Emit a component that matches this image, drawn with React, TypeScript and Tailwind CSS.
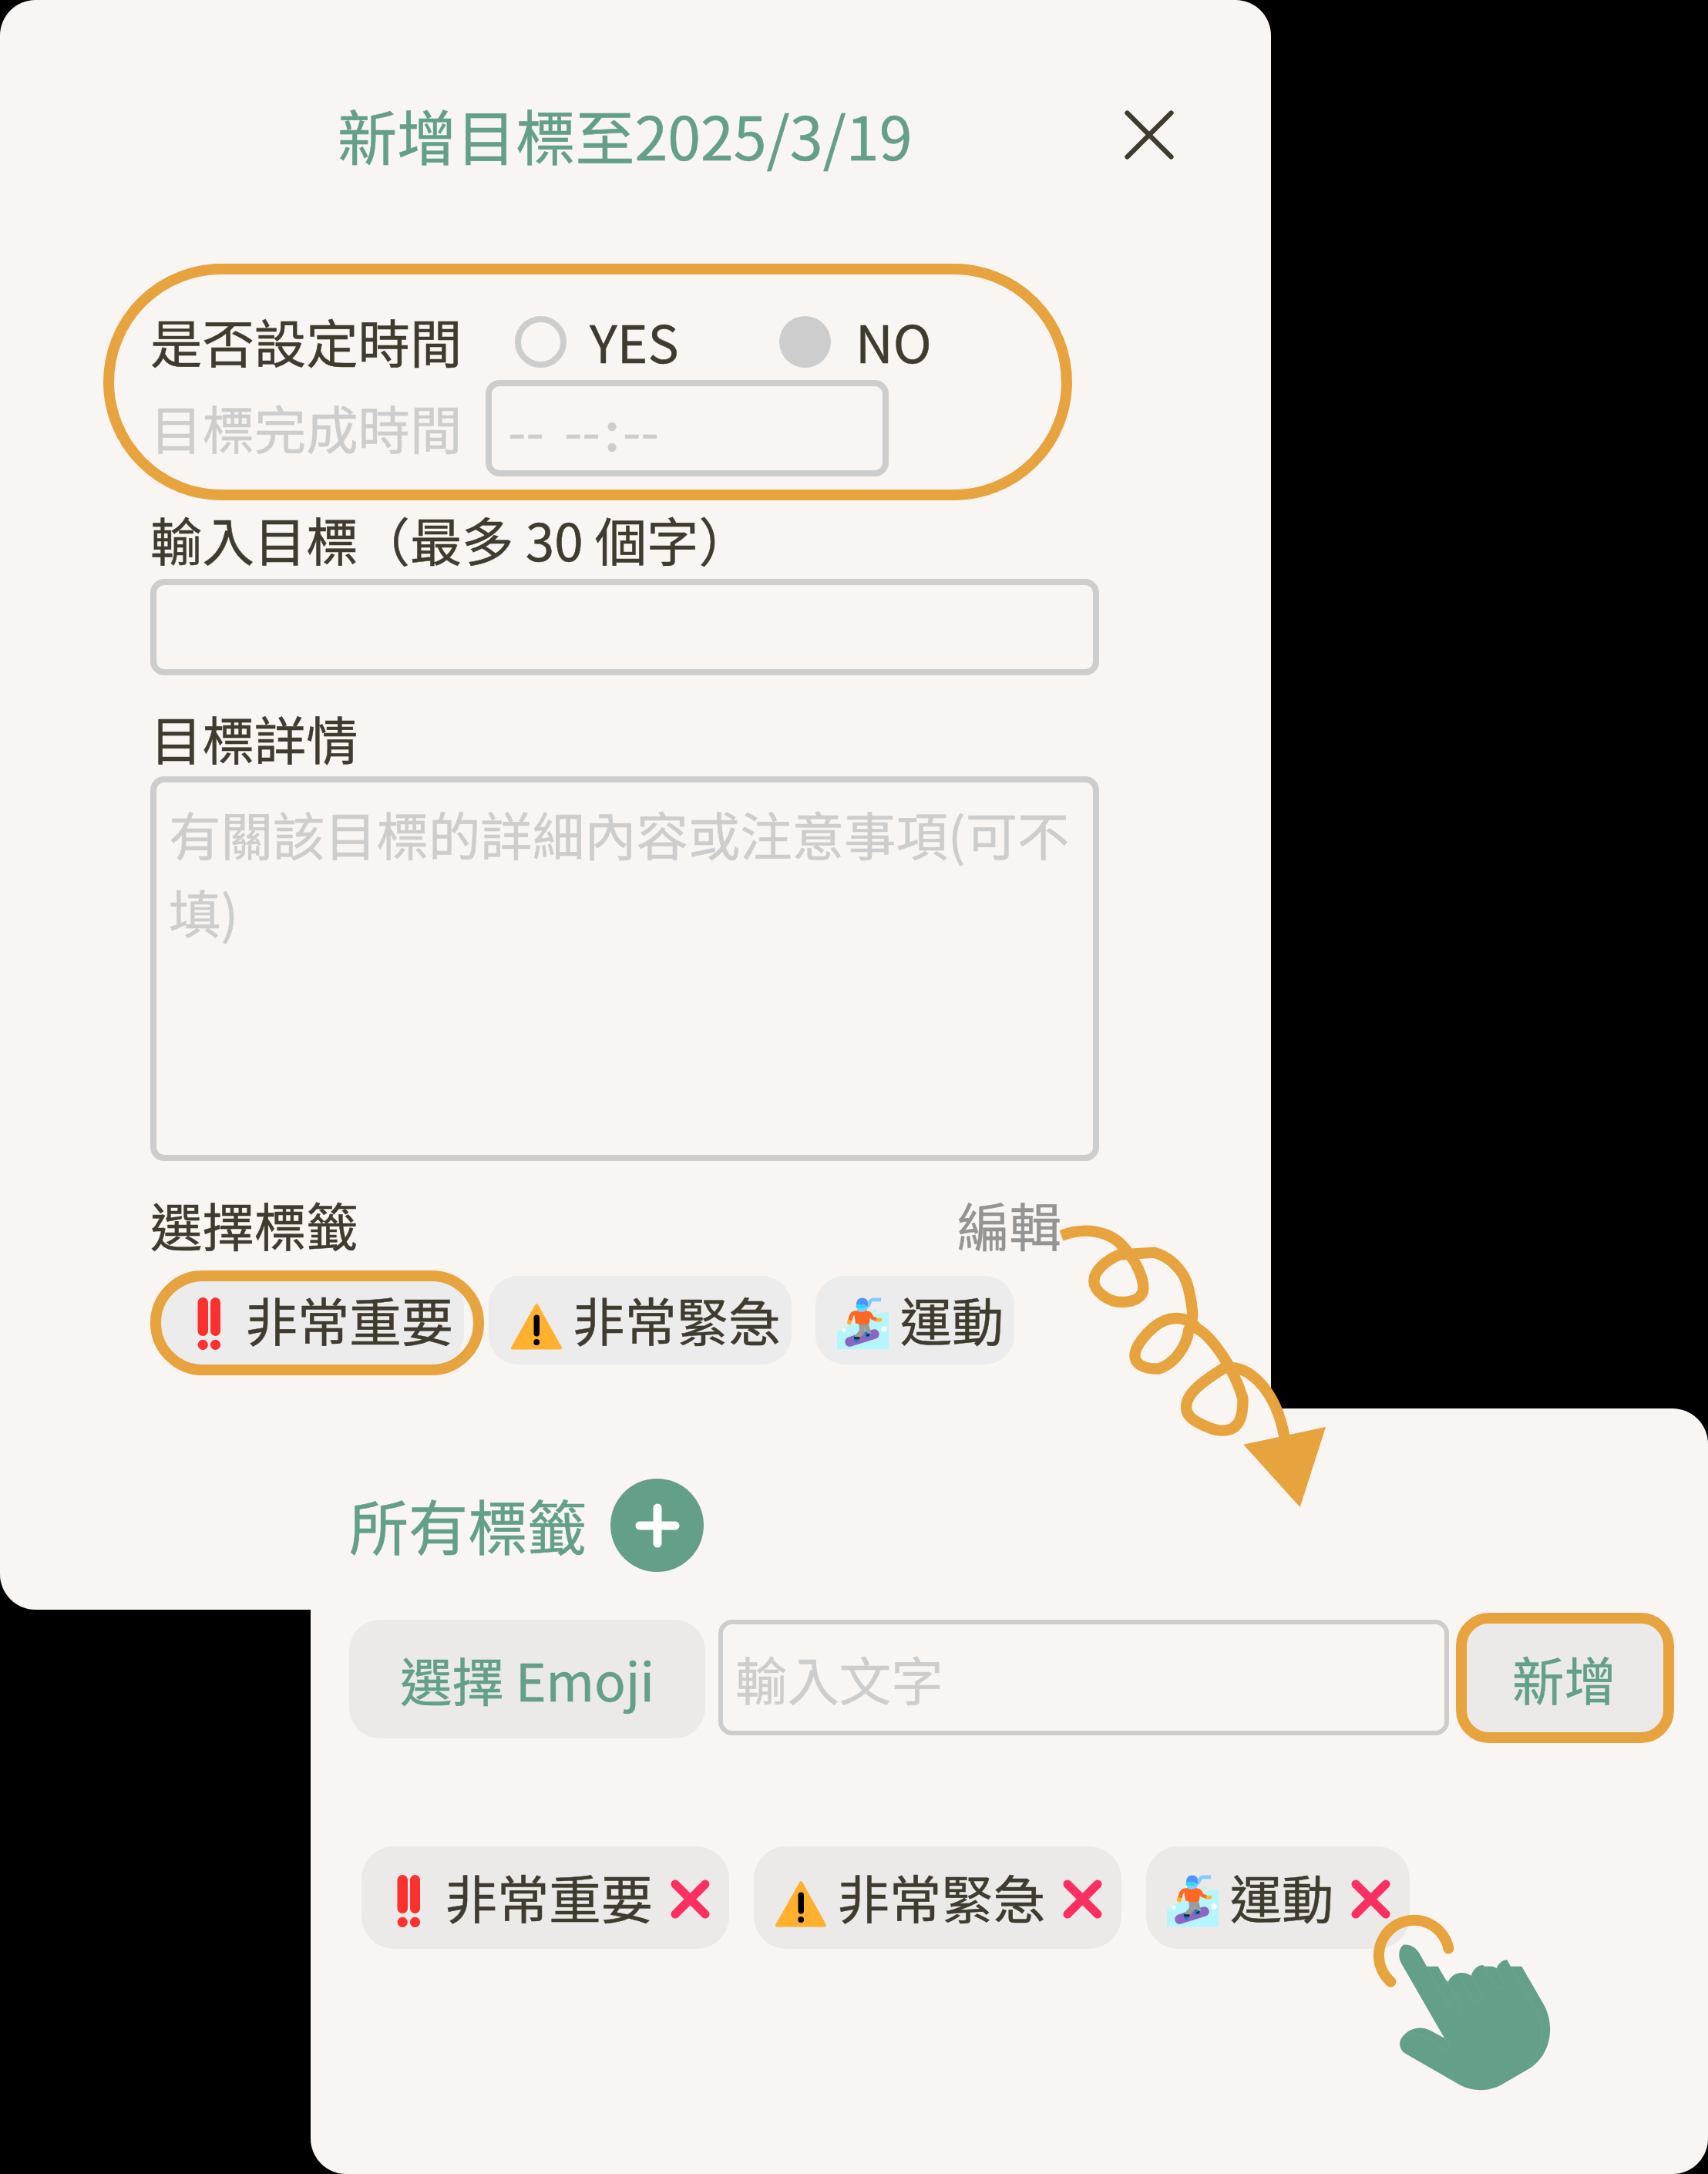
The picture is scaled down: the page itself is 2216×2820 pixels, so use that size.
import type { ReactNode } from "react";

function DoubleBang() {
  return (
    <svg className="h-[68px] w-[67px] shrink-0" viewBox="0 0 67 68" fill="#fb302f">
      <rect x="19.500" y="0" width="13.5" height="50" rx="6.5" />
      <rect x="36" y="0" width="13" height="50" rx="6.5" />
      <circle cx="26.2" cy="61.3" r="6.6" />
      <circle cx="42.5" cy="61.3" r="6.6" />
    </svg>
  );
}

function Warning() {
  return (
    <svg className="h-[68px] w-[67px] shrink-0" viewBox="0 0 67 68">
      <path d="M32 10 Q34 6 36.500 10 L66.500 64 Q68 67.500 65 67.500 H3 Q0 67.500 1.500 64 Z" fill="#ffb02e" />
      <rect x="30.500" y="22.500" width="7.500" height="28" rx="3.700" fill="#000" />
      <circle cx="34.200" cy="58" r="3.900" fill="#000" />
    </svg>
  );
}

function Snowboarder() {
  return (
    <svg className="h-[68px] w-[67px] shrink-0" viewBox="0 0 202 204">
      <path d="M0 137 C30 112 55 105 90 92 C130 75 165 58 202 56 V202 H0 Z" fill="#b4f5fe" />
      <circle cx="27" cy="127" r="8" fill="#fff" />
      <circle cx="184" cy="123" r="11" fill="#fff" />
      <circle cx="148" cy="52" r="8" fill="#b4f5fe" />
      <path d="M50 173 L146 143" stroke="#8d65c5" strokeWidth="38" strokeLinecap="round" />
      <path d="M96 98 L98 132 L76 158" fill="none" stroke="#9b9b9b" strokeWidth="21" strokeLinejoin="round" />
      <path d="M112 98 L118 120 L124 144" fill="none" stroke="#9b9b9b" strokeWidth="20" strokeLinejoin="round" />
      <path d="M66 142 L70 158 L88 164 L78 176 L66 168 Z" fill="#0084ce" />
      <path d="M108 132 L130 142 L130 152 L112 156 Z" fill="#0084ce" />
      <path d="M66 154 L90 154 L88 163 L68 162 Z" fill="#212121" />
      <path d="M114 144 L128 142 L124 151 L116 151 Z" fill="#212121" />
      <path d="M50 88 L48 98" stroke="#ffb02e" strokeWidth="17" strokeLinecap="round" />
      <path d="M156 88 L169 87" stroke="#ffb02e" strokeWidth="14" strokeLinecap="round" />
      <path d="M74 60 C60 58 54 70 52 88" fill="none" stroke="#ff6723" strokeWidth="15" />
      <path d="M128 62 L138 80 L154 86" fill="none" stroke="#ff6723" strokeWidth="14" />
      <path d="M66 54 Q98 44 132 56 L126 102 Q100 110 72 100 Z" fill="#ff6723" />
      <path d="M112 38 C134 32 120 8 142 8 H172" fill="none" stroke="#83cbff" strokeWidth="14" />
      <path d="M76 30 C74 8 88 0 100 1 C116 2 124 14 120 34 Z" fill="#5092ff" />
      <path d="M78 38 H118 V48 Q100 64 80 52 Z" fill="#83cbff" />
      <rect x="74" y="27" width="38" height="15" rx="7" fill="#26ddf0" />
    </svg>
  );
}

function Tag({
  icon,
  label,
  removable,
  children,
}: {
  icon: ReactNode;
  label: string;
  removable?: boolean;
  children?: ReactNode;
}) {
  return (
    <div
      className={
        removable
          ? "relative flex h-[133px] items-center rounded-[42px] bg-[#ebeae8] pr-[25px] pl-[27px]"
          : "relative flex h-[115px] items-center rounded-[38px] bg-[#ececec] pr-[14px] pl-[28px]"
      }
    >
      <span className="mt-[9px] mr-[14.5px] flex">{icon}</span>
      <span className="-mt-[4px]">{label}</span>
      {removable && (
        <svg className="mt-[4px] ml-[23px] h-[51px] w-[51px]" viewBox="0 0 51 51" stroke="#fb3061" strokeWidth="11" strokeLinecap="round">
          <path d="M6 6 L45 45 M45 6 L6 45" />
        </svg>
      )}
      {children}
    </div>
  );
}

function Header() {
  return (
    <header className="flex h-[342px] items-start pt-[119px] pl-[438px]">
      <h1 className="h-[112px] w-[1021px] text-[77.1px] leading-[112px] text-[#63a087]">新增目標至2025/3/19</h1>
      <svg className="mt-[24px] h-[64px] w-[64px]" viewBox="0 0 64 64" stroke="#403b2e" strokeWidth="6.200" strokeLinecap="round">
        <path d="M3.500 3.500 L60.500 60.500 M60.500 3.500 L3.500 60.500" />
      </svg>
    </header>
  );
}

function TimeSetting() {
  return (
    <section className="ml-[134px] h-[307px] w-[1257px] rounded-full border-[14.5px] border-[#e7a33e] pt-[37px] pl-[47px]">
      <div className="flex h-[100px] items-center">
        <span className="-mt-[3px] w-[473px]">是否設定時間</span>
        <span className="h-[67px] w-[67px] rounded-full border-[8px] border-[#cdcdcd]" />
        <span className="-mt-[3px] ml-[30px] w-[246px]">YES</span>
        <span className="h-[67px] w-[67px] rounded-full bg-[#cdcdcd]" />
        <span className="-mt-[3px] ml-[32px]">NO</span>
      </div>
      <div className="flex h-[125px] items-center text-[#cdcdcd]">
        <span className="-mt-[4px] w-[435px]">目標完成時間</span>
        <div className="flex h-[125px] w-[523px] items-center rounded-[18px] border-[8px] border-[#cdcdcd] pl-[21px]">
          <span className="w-[73px]">--</span>
          <span className="w-[52px]">--</span>
          <span className="w-[24px] font-medium">:</span>
          <span>--</span>
        </div>
      </div>
    </section>
  );
}

function GoalCard() {
  return (
    <main className="h-[2088px] w-[1649px] rounded-[46px] bg-[#f9f5f2]">
      <Header />
      <TimeSetting />
      <div className="ml-[195px] w-[1231px]">
        <div className="flex h-[102px] items-center pb-[3px]">輸入目標（最多 30 個字）</div>
        <div className="h-[125px] rounded-[18px] border-[8px] border-[#cdcdcd]" />
        <div className="mt-[31px] flex h-[100px] items-center pb-[1px]">目標詳情</div>
        <div className="h-[499px] rounded-[18px] border-[8px] border-[#cdcdcd] pt-[15px] pr-[10px] pl-[16px] leading-[101px] text-[#cdcdcd]">
          有關該目標的詳細內容或注意事項(可不填)
        </div>
        <div className="mt-[32px] flex h-[100px] items-center">
          <span className="w-[1047px]">選擇標籤</span>
          <span className="text-[#949494]">編輯</span>
        </div>
        <div className="mt-[17px] ml-[14px] flex gap-[31.500px]">
          <Tag icon={<DoubleBang />} label="非常重要">
            <span className="absolute -top-[7px] -left-[14px] h-[136px] w-[433px] rounded-full border-[14.5px] border-[#e7a33e]" />
          </Tag>
          <Tag icon={<Warning />} label="非常緊急" />
          <Tag icon={<Snowboarder />} label="運動" />
        </div>
      </div>
    </main>
  );
}

function TagCard() {
  return (
    <section className="-mt-[261px] ml-[403px] h-[993px] w-[1813px] rounded-[46px] bg-[#f9f5f2] pt-[91px] pl-[50px]">
      <div className="flex h-[121px] items-center">
        <h2 className="-mt-[2px] w-[339px] text-[77.1px] leading-[112px] text-[#63a087]">所有標籤</h2>
        <span className="flex h-[121px] w-[121px] items-center justify-center rounded-full bg-[#63a087]">
          <svg className="h-[60px] w-[60px]" viewBox="0 0 60 60" stroke="#fff" strokeWidth="11" strokeLinecap="round">
            <path d="M30 7 V53 M7 30 H53" />
          </svg>
        </span>
      </div>
      <div className="mt-[53px] flex h-[169px] items-center text-[#63a087]">
        <div className="mt-[3px] flex h-[154px] w-[462px] items-center justify-center rounded-[40px] bg-[#ebeae8] pb-[1px]">選擇 Emoji</div>
        <div className="-mt-px ml-[17px] flex h-[150px] w-[948px] items-center rounded-[18px] border-[6px] border-[#cdcdcd] pt-[2px] pl-[16px] text-[#cdcdcd]">
          輸入文字
        </div>
        <div className="ml-[9px] flex h-[169px] w-[283px] items-center justify-center rounded-[43px] border-[14.5px] border-[#e7a33e] bg-[#ebeae8] pr-[2px]">
          新增
        </div>
      </div>
      <div className="mt-[134px] ml-[16px] flex gap-[32px]">
        <Tag removable icon={<DoubleBang />} label="非常重要" />
        <Tag removable icon={<Warning />} label="非常緊急" />
        <Tag removable icon={<Snowboarder />} label="運動" />
      </div>
    </section>
  );
}

function SpiralArrow() {
  return (
    <svg className="absolute top-[1540px] left-[1340px] h-[440px] w-[420px]" viewBox="0 0 1260 1320">
      <path
        d="M111 188 C200 155 300 165 360 240 C402 290 430 350 430 392 C430 430 390 447 348 447 C290 447 238 403 238 365 C238 325 285 285 336 263 L472 254 C530 270 590 320 606 395 C625 480 628 515 607 555 C600 610 560 685 488 707 C430 707 397 688 397 655 C397 620 440 570 470 545 C530 495 600 500 640 550 C700 585 780 700 817 820 C820 900 800 947 738 947 C700 947 660 925 630 908 C610 895 597 880 597 855 C597 800 670 750 740 706 C830 680 945 780 980 975"
        fill="none"
        stroke="#e7a33e"
        strokeWidth="43"
      />
      <path d="M820 1001 L1140 933 L1040 1245 Z" fill="#e7a33e" />
    </svg>
  );
}

function TapHand() {
  return (
    <svg className="absolute top-[2360px] left-[1740px] h-[380px] w-[320px]" viewBox="0 0 960 1140">
      <path d="M193 632 A137 137 0 1 1 418 502" fill="none" stroke="#e7a33e" strokeWidth="42" strokeLinecap="round" />
      <path
        d="M242 488 C275 485 295 505 305 522 L333 572 H377 L406 622 L416 633 C435 590 480 590 506 608 C515 580 535 567 553 567 L556 572 H590 Q598 574 605 580 C612 560 628 548 645 546 L660 572 H703 L793 728 C835 815 810 920 735 968 L625 1032 C575 1060 515 1060 465 1035 L250 911 C228 897 222 870 236 850 C260 815 305 800 348 822 L402 851 L233 558 C222 535 222 505 242 488 Z"
        fill="#63a087"
      />
      <path
        d="M333 572 L430 740 C445 765 475 755 466 725 L416 633 M462 608 L512 697 C528 718 553 710 547 680 L506 608 M553 567 L594 642 C610 668 637 660 632 630 L605 580 M660 572 L755 735 C800 825 785 900 735 965 M268 832 C320 828 355 870 408 896 Q425 892 420 877 L402 851"
        fill="none"
        stroke="#76ac8d"
        strokeWidth="1.500"
      />
    </svg>
  );
}

export default function App() {
  return (
    <div className="relative h-[2820px] w-[2216px] overflow-hidden bg-black font-['Noto_Sans_CJK_TC',sans-serif] text-[67.4px] leading-[100px] text-[#403b2e] [-webkit-text-stroke:0.5px_currentColor]">
      <GoalCard />
      <TagCard />
      <SpiralArrow />
      <TapHand />
    </div>
  );
}
